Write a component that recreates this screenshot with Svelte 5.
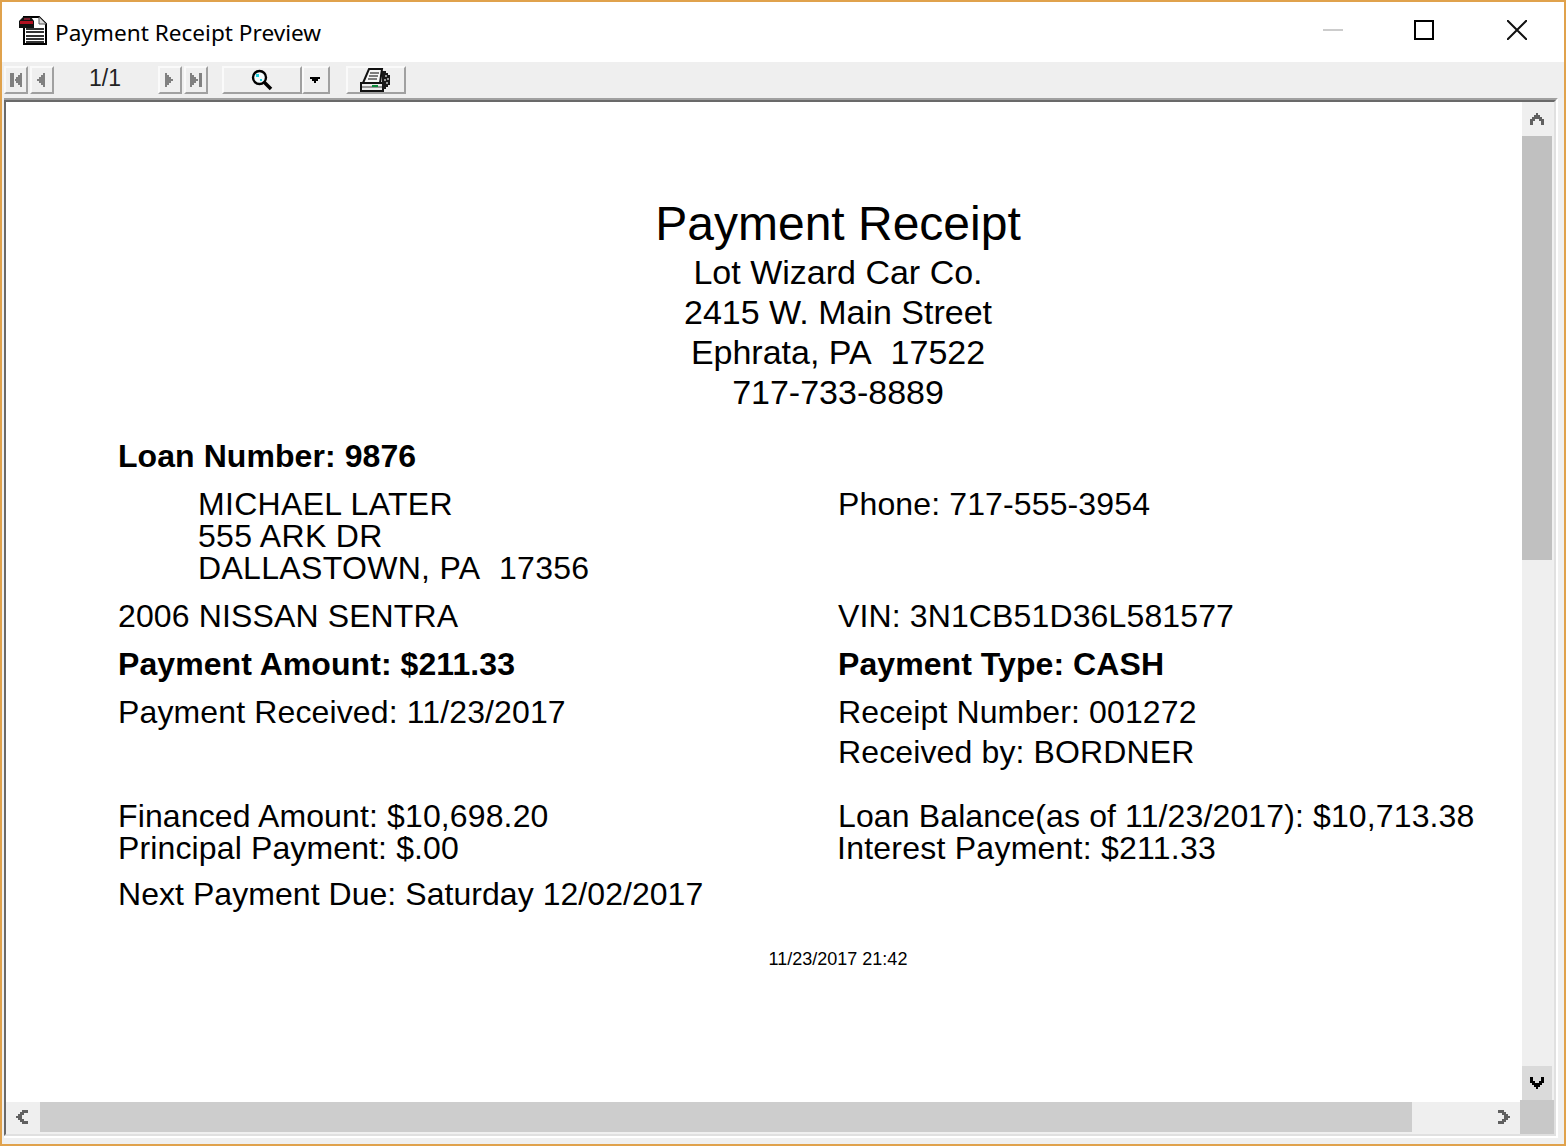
<script>
  const navFirst = [
    { id: 'first', path: 'M4 5h4v14H4zM14 5h2v14h-2zM12 7h2v10h-2zM10 9h2v6h-2zM9 11h1v2H9z' },
    { id: 'prev', path: 'M11 5h2v14h-2zM9 7h2v10H9zM7 9h2v6H7zM5 11h2v2H5z' }
  ];
  const navLast = [
    { id: 'next', path: 'M5 5h2v14H5zM7 7h2v10H7zM9 9h2v6H9zM11 11h2v2h-2z' },
    { id: 'last', path: 'M4 5h2v14H4zM6 7h2v10H6zM8 9h2v6H8zM10 11h2v2h-2zM13 5h3v14h-3z' }
  ];
</script>

<div class="window">
  <header class="titlebar">
    <svg class="app-icon" viewBox="0 0 28 32" width="28" height="32">
      <path d="M5 2h15l7 7v20H5z" fill="#fff" stroke="#000" stroke-width="2" />
      <path d="M20 2v7h7" fill="#ddd" stroke="#555" stroke-width="1" />
      <path d="M7 13h18v2H7zM7 16h18v2H7zM7 20h18v2H7zM7 23h18v2H7zM7 26h18v2H7z" fill="#333" />
      <path d="M4 2h8l3 4v7H0V6z" fill="#111" />
      <path d="M1 6h13v3H1z" fill="#b01020" />
      <path d="M5 3h6v2H5z" fill="#7a2030" />
    </svg>
    <span class="title">Payment Receipt Preview</span>
    <div class="window-controls">
      <svg class="ctl-min" viewBox="0 0 20 20" width="20" height="20"><path d="M0 9h20v2H0z" fill="#ccc" /></svg>
      <svg class="ctl-max" viewBox="0 0 20 20" width="20" height="20"><path d="M1 1h18v18H1z" fill="none" stroke="#000" stroke-width="2" /></svg>
      <svg class="ctl-close" viewBox="0 0 20 20" width="20" height="20"><path d="M0 0l20 20M20 0L0 20" fill="none" stroke="#111" stroke-width="2" /></svg>
    </div>
  </header>

  <div class="toolbar">
    <div class="group">
      {#each navFirst as b}
        <button class="btn nav"><svg viewBox="0 0 20 24" width="20" height="24" shape-rendering="crispEdges"><path d={b.path} fill="#808080" /></svg></button>
      {/each}
    </div>
    <span class="pager">1/1</span>
    <div class="group">
      {#each navLast as b}
        <button class="btn nav"><svg viewBox="0 0 20 24" width="20" height="24" shape-rendering="crispEdges"><path d={b.path} fill="#808080" /></svg></button>
      {/each}
    </div>
    <div class="group zoom-group">
      <button class="btn zoom">
        <svg viewBox="0 0 22 22" width="22" height="22">
          <circle cx="8.5" cy="8.5" r="6.5" fill="#f4fbfc" stroke="#000" stroke-width="2.4" />
          <path d="M5 5h3v3H5zM9 10h2v2H9z" fill="#1fd0e0" />
          <path d="M13 13l7 7" stroke="#000" stroke-width="3.6" />
        </svg>
      </button>
      <button class="btn caret"><svg viewBox="0 0 10 6" width="10" height="6" shape-rendering="crispEdges"><path d="M0 0h10v2H8v2H6v2H4V4H2V2H0z" fill="#000" /></svg></button>
    </div>
    <button class="btn print">
      <svg viewBox="0 0 32 26" width="32" height="26">
        <path d="M3 16L9 2h13l-2 14z" fill="#f6f6f6" stroke="#111" stroke-width="2" />
        <path d="M10 6h9M9 9h9M8 12h9" stroke="#555" stroke-width="1.5" />
        <path d="M1 16h22v8H1z" fill="#ececec" stroke="#111" stroke-width="2" />
        <path d="M2 20h20" stroke="#777" stroke-width="1.5" />
        <path d="M12 18h6v2h-6z" fill="#0a8a3a" />
        <path d="M22 4h4v2h2v2h2v10h-2v2h-2v2h-4z" fill="#1a1a1a" />
        <path d="M25 8h2v2h-2zM27 11h2v2h-2zM24 12h2v2h-2zM26 15h2v2h-2z" fill="#999" />
      </svg>
    </button>
  </div>

  <div class="frame">
    <div class="sunken-outer">
      <div class="sunken">
        <div class="top-row">
          <main class="viewport">
            <div class="report">
              <h1>Payment Receipt</h1>
              <div class="company">
                <div>Lot Wizard Car Co.</div>
                <div>2415 W. Main Street</div>
                <div>Ephrata, PA&nbsp; 17522</div>
                <div>717-733-8889</div>
              </div>

              <div class="line strong loan">Loan Number: 9876</div>

              <div class="cols customer">
                <div class="address">
                  <div>MICHAEL LATER</div>
                  <div>555 ARK DR</div>
                  <div>DALLASTOWN, PA&nbsp; 17356</div>
                </div>
                <div>Phone: 717-555-3954</div>
              </div>

              <div class="cols vehicle">
                <div>2006 NISSAN SENTRA</div>
                <div>VIN: 3N1CB51D36L581577</div>
              </div>

              <div class="cols strong payment">
                <div>Payment Amount: $211.33</div>
                <div>Payment Type: CASH</div>
              </div>

              <div class="cols received">
                <div>Payment Received: 11/23/2017</div>
                <div class="receipt">
                  <div>Receipt Number: 001272</div>
                  <div>Received by: BORDNER</div>
                </div>
              </div>

              <div class="cols totals">
                <div>
                  <div>Financed Amount: $10,698.20</div>
                  <div>Principal Payment: $.00</div>
                </div>
                <div>
                  <div>Loan Balance(as of 11/23/2017): $10,713.38</div>
                  <div class="interest">Interest Payment: $211.33</div>
                </div>
              </div>

              <div class="line next">Next Payment Due: Saturday 12/02/2017</div>
              <div class="printed">11/23/2017 21:42</div>
            </div>
          </main>
          <div class="vbar">
            <div class="arrow-v">
              <svg viewBox="0 0 14 12" width="14" height="12" shape-rendering="crispEdges"><path d="M6 0h2v2H6zM4 2h6v2H4zM2 4h10v2H2zM0 6h5v2H0zM9 6h5v2H9zM0 8h3v4H0zM11 8h3v4h-3z" fill="#606060" /></svg>
            </div>
            <div class="vthumb"></div>
            <div class="vtrack"></div>
            <div class="arrow-v active">
              <svg viewBox="0 0 14 12" width="14" height="12" shape-rendering="crispEdges"><path d="M6 10h2v2H6zM4 8h6v2H4zM2 6h10v2H2zM0 4h5v2H0zM9 4h5v2H9zM0 0h3v4H0zM11 0h3v4h-3z" fill="#000" /></svg>
            </div>
          </div>
        </div>
        <div class="bottom-row">
          <div class="hbar">
            <div class="arrow-h">
              <svg viewBox="0 0 12 14" width="12" height="14" shape-rendering="crispEdges"><path d="M0 6h2v2H0zM2 4h2v6H2zM4 2h2v10H4zM6 0h2v5H6zM6 9h2v5H6zM8 0h4v3H8zM8 11h4v3H8z" fill="#606060" /></svg>
            </div>
            <div class="hthumb"></div>
            <div class="htrack"></div>
            <div class="arrow-h right">
              <svg viewBox="0 0 12 14" width="12" height="14" shape-rendering="crispEdges"><path d="M10 6h2v2h-2zM8 4h2v6H8zM6 2h2v10H6zM4 0h2v5H4zM4 9h2v5H4zM0 0h4v3H0zM0 11h4v3H0z" fill="#606060" /></svg>
            </div>
          </div>
          <div class="corner"></div>
        </div>
      </div>
    </div>
  </div>
</div>

<style>
  :global(body) { margin: 0; background: #fff; }
  .window { box-sizing: border-box; width: 1566px; height: 1146px; border: 2px solid #e0a24c; display: flex; flex-direction: column; background: #f0f0f0; overflow: hidden; }

  .titlebar { height: 60px; flex: none; background: #fff; display: flex; align-items: flex-start; }
  .app-icon { margin: 13px 0 0 17px; }
  .title { margin: 14px 0 0 8px; font: 22.6px/34px "Noto Sans", sans-serif; color: #000; }
  .window-controls { margin-left: auto; display: flex; padding: 18px 37px 0 0; }
  .ctl-min { margin-right: 71px; }
  .ctl-max { margin-right: 73px; }

  .toolbar { height: 36px; flex: none; box-sizing: border-box; padding: 4px 0 0 2px; display: flex; align-items: flex-start; background: #efefef; }
  .group { display: flex; gap: 2px; }
  .zoom-group { gap: 0; margin-left: 14px; }
  .btn { box-sizing: border-box; height: 28px; padding: 0; display: flex; align-items: center; justify-content: center; background: #efefef; border: 2px solid; border-color: #fafafa #a0a0a0 #a0a0a0 #fafafa; }
  .nav { width: 24px; }
  .pager { width: 102px; margin-right: 2px; text-align: center; font: 23px/24px "Liberation Sans", sans-serif; color: #222; }
  .zoom { width: 80px; }
  .caret { width: 28px; padding-right: 2px; }
  .print { width: 60px; margin-left: 16px; }

  .frame { flex: 1; min-height: 0; display: flex; padding: 0 6px 6px 2px; }
  .sunken-outer { flex: 1; min-width: 0; display: flex; border-top: 2px solid #a0a0a0; border-right: 2px solid #fff; border-bottom: 2px solid #fff; }
  .sunken { flex: 1; min-width: 0; display: flex; flex-direction: column; border-style: solid; border-width: 2px; border-color: #696969 #e0e0e0 #e0e0e0 #696969; background: #f0f0f0; }
  .top-row { flex: 1; min-height: 0; display: flex; }
  .viewport { flex: 1; min-width: 0; background: #fff; overflow: hidden; }

  .vbar { width: 30px; margin-right: 2px; flex: none; display: flex; flex-direction: column; background: #efefef; }
  .arrow-v { height: 34px; flex: none; display: flex; align-items: center; justify-content: center; }
  .arrow-v.active { background: #dadada; }
  .vthumb { height: 424px; flex: none; background: #c0c0c0; }
  .vtrack { flex: 1; }

  .bottom-row { height: 34px; flex: none; display: flex; }
  .hbar { flex: 1; min-width: 0; border-top: 2px solid #fff; margin-bottom: 2px; display: flex; background: #efefef; }
  .arrow-h { width: 34px; flex: none; display: flex; align-items: center; padding-left: 10px; box-sizing: border-box; }
  .arrow-h.right { padding-left: 12px; }
  .hthumb { width: 1372px; flex: none; background: #cdcdcd; }
  .htrack { flex: 1; }
  .corner { width: 34px; flex: none; background: #c8c8c8; }

  .report { box-sizing: border-box; width: 1552px; padding: 98px 0 0 112px; font: 32px/32px "Liberation Sans", Arial, sans-serif; letter-spacing: 0.13px; color: #000; }
  h1 { margin: 0; width: 1440px; text-align: center; font: 400 48px/48px "Liberation Sans", Arial, sans-serif; letter-spacing: 0; }
  .company { width: 1440px; text-align: center; font-size: 34px; line-height: 40px; margin-top: 4px; letter-spacing: 0; }
  .line { white-space: nowrap; }
  .strong { font-weight: 700; letter-spacing: 0.07px; }
  .loan { margin-top: 24px; line-height: 40px; }
  .cols { display: grid; grid-template-columns: 720px 720px; white-space: nowrap; }
  .customer { margin-top: 12px; }
  .address { padding-left: 80px; letter-spacing: 0.32px; }
  .vehicle { margin-top: 16px; }
  .payment { margin-top: 16px; }
  .received { margin-top: 16px; }
  .receipt { display: flex; flex-direction: column; gap: 8px; }
  .totals { margin-top: 32px; }
  .interest { margin-left: -1px; letter-spacing: 0.24px; }
  .next { margin-top: 14px; letter-spacing: 0.05px; }
  .printed { width: 1440px; margin-top: 39px; text-align: center; font-size: 18px; line-height: 20px; letter-spacing: 0; }
</style>
